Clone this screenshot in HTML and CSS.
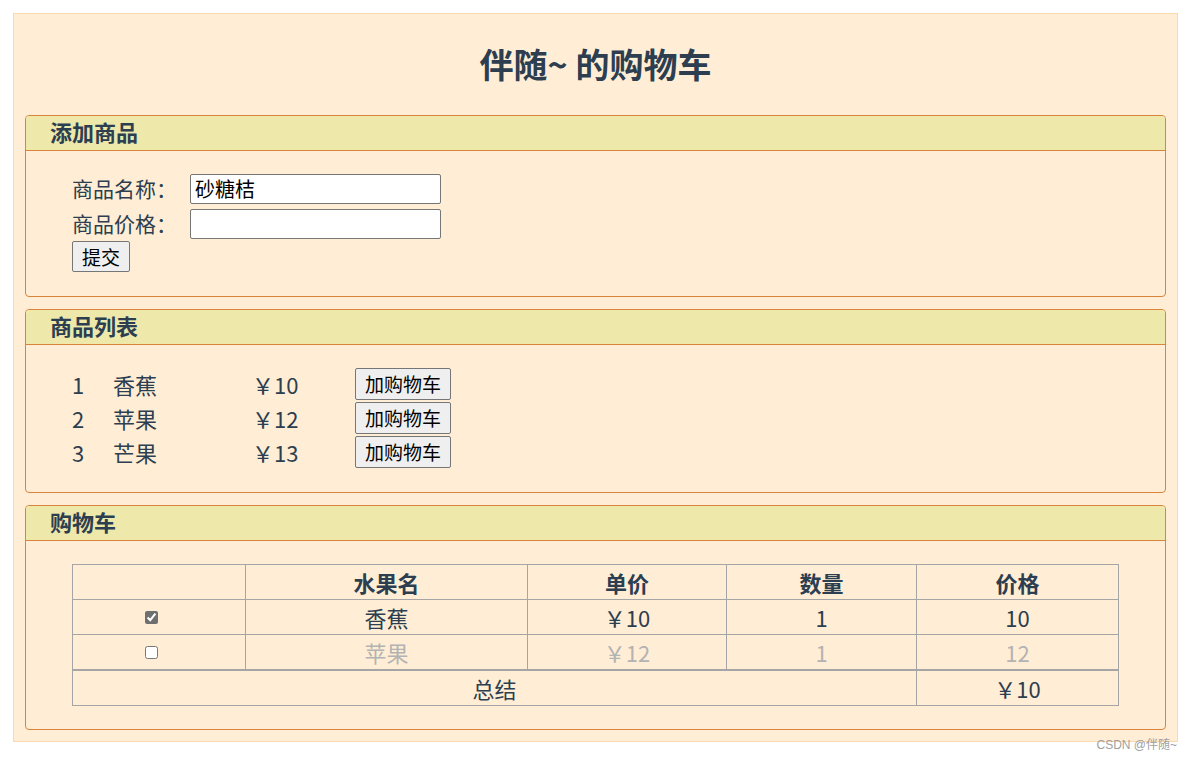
FILE: index.html
```html
<!DOCTYPE html>
<html lang="zh-CN">
<head>
<meta charset="utf-8">
<title>伴随~ 的购物车</title>
<link rel="stylesheet" href="styles.css">
</head>
<body>
<div class="app">
  <h1 class="title">伴随~ 的购物车</h1>

  <section class="panel">
    <h2 class="panel-head">添加商品</h2>
    <div class="panel-body form">
      <div class="form-row">
        <label class="form-label">商品名称：</label>
        <input class="form-input" type="text" value="砂糖桔">
      </div>
      <div class="form-row">
        <label class="form-label">商品价格：</label>
        <input class="form-input" type="text" value="">
      </div>
      <div class="form-actions">
        <button class="btn" type="button">提交</button>
      </div>
    </div>
  </section>

  <section class="panel">
    <h2 class="panel-head">商品列表</h2>
    <div class="panel-body list">
      <div class="item">
        <span class="item-idx">1</span>
        <span class="item-name">香蕉</span>
        <span class="item-price">￥10</span>
        <button class="btn" type="button">加购物车</button>
      </div>
      <div class="item">
        <span class="item-idx">2</span>
        <span class="item-name">苹果</span>
        <span class="item-price">￥12</span>
        <button class="btn" type="button">加购物车</button>
      </div>
      <div class="item">
        <span class="item-idx">3</span>
        <span class="item-name">芒果</span>
        <span class="item-price">￥13</span>
        <button class="btn" type="button">加购物车</button>
      </div>
    </div>
  </section>

  <section class="panel">
    <h2 class="panel-head">购物车</h2>
    <div class="panel-body cart">
      <table class="cart-table">
        <colgroup>
          <col class="c-check">
          <col class="c-name">
          <col class="c-unit">
          <col class="c-qty">
          <col class="c-total">
        </colgroup>
        <thead>
          <tr>
            <th></th>
            <th>水果名</th>
            <th>单价</th>
            <th>数量</th>
            <th>价格</th>
          </tr>
        </thead>
        <tbody>
          <tr>
            <td class="check-cell"><input class="check" type="checkbox" checked></td>
            <td>香蕉</td>
            <td>￥10</td>
            <td>1</td>
            <td>10</td>
          </tr>
          <tr class="off">
            <td class="check-cell"><input class="check" type="checkbox"></td>
            <td>苹果</td>
            <td>￥12</td>
            <td>1</td>
            <td>12</td>
          </tr>
        </tbody>
        <tfoot>
          <tr>
            <td colspan="4">总结</td>
            <td>￥10</td>
          </tr>
        </tfoot>
      </table>
    </div>
  </section>
</div>
<div class="watermark">CSDN @伴随~</div>
</body>
</html>
```

FILE: styles.css
```css
html, body {
  margin: 0;
  padding: 0;
  background: #ffffff;
}

body {
  font-family: "Noto Sans CJK SC", "Liberation Sans", sans-serif;
  color: #2c3e50;
  width: 1190px;
  height: 758px;
  position: relative;
}

.app {
  margin: 13px 12px 0 13px;
  background: #ffeed5;
  border: 1px solid #fcd9aa;
  padding: 0 11px 11px 11px;
}

.title {
  margin: 0;
  height: 101px;
  line-height: 100px;
  text-align: center;
  font-size: 34px;
  font-weight: bold;
  color: #2c3e50;
}

.panel {
  border: 1px solid #d8843a;
  border-radius: 4px;
  margin-bottom: 12px;
  overflow: hidden;
}

.panel:last-child {
  margin-bottom: 0;
}

.panel-head {
  margin: 0;
  background: #eee8aa;
  border-bottom: 1px solid #d8843a;
  height: 34px;
  line-height: 31px;
  padding-left: 24px;
  font-size: 22px;
  font-weight: bold;
  color: #2c3e50;
}

.panel-body {
  padding: 0 46px;
  font-size: 22px;
}

/* form */
.form {
  padding-top: 20px;
  padding-bottom: 24px;
}

.form-row {
  display: flex;
  align-items: center;
  height: 35px;
}

.form-label {
  width: 118px;
  flex: none;
  font-size: 21px;
  line-height: 35px;
}

.form-input {
  box-sizing: border-box;
  width: 251px;
  height: 30px;
  margin: 0;
  padding: 0 4px;
  border: 1px solid #767676;
  border-radius: 2px;
  background: #ffffff;
  font-family: "Noto Sans CJK SC", "Liberation Sans", sans-serif;
  font-size: 20px;
  color: #000000;
}

.form-actions {
  display: flex;
}

.btn {
  box-sizing: border-box;
  height: 31px;
  margin: 0;
  padding: 0 9px;
  background: #efefef;
  border: 1px solid #767676;
  border-radius: 2px;
  font-family: "Noto Sans CJK SC", "Liberation Sans", sans-serif;
  font-size: 19px;
  line-height: 27px;
  color: #000000;
}

/* list */
.list {
  padding-top: 22px;
  padding-bottom: 23px;
}

.item {
  display: flex;
  align-items: center;
  height: 34px;
  line-height: 32px;
}

.item .btn {
  height: 32px;
  line-height: 28px;
}

.item-idx {
  width: 41px;
}

.item-name {
  width: 139px;
}

.item-price {
  width: 103px;
}

/* cart */
.cart {
  padding-top: 23px;
  padding-bottom: 23px;
}

.cart-table {
  width: 100%;
  border-collapse: collapse;
  table-layout: fixed;
  font-size: 22px;
  line-height: 28px;
  text-align: center;
}

.c-check { width: 173px; }
.c-name { width: 282px; }
.c-unit { width: 199px; }
.c-qty { width: 190px; }
.c-total { width: auto; }

.cart-table th,
.cart-table td {
  border: 1px solid #a5a5a5;
  height: 34px;
  padding: 0;
  vertical-align: middle;
}

.cart-table th {
  font-weight: bold;
}

.cart-table tfoot td {
  border-top: 2px solid #a5a5a5;
}

.cart-table .off td {
  color: #b3b3b3;
}

.cart-table .check-cell {
  line-height: 0;
}

.check {
  display: block;
  margin: 0 0 0 72px;
  width: 13px;
  height: 13px;
  accent-color: #6f6f6f;
}

.watermark {
  position: absolute;
  right: 13px;
  top: 735px;
  font-size: 12px;
  color: #a0a0a0;
  font-family: "Liberation Sans", "Noto Sans CJK SC", sans-serif;
}
```
